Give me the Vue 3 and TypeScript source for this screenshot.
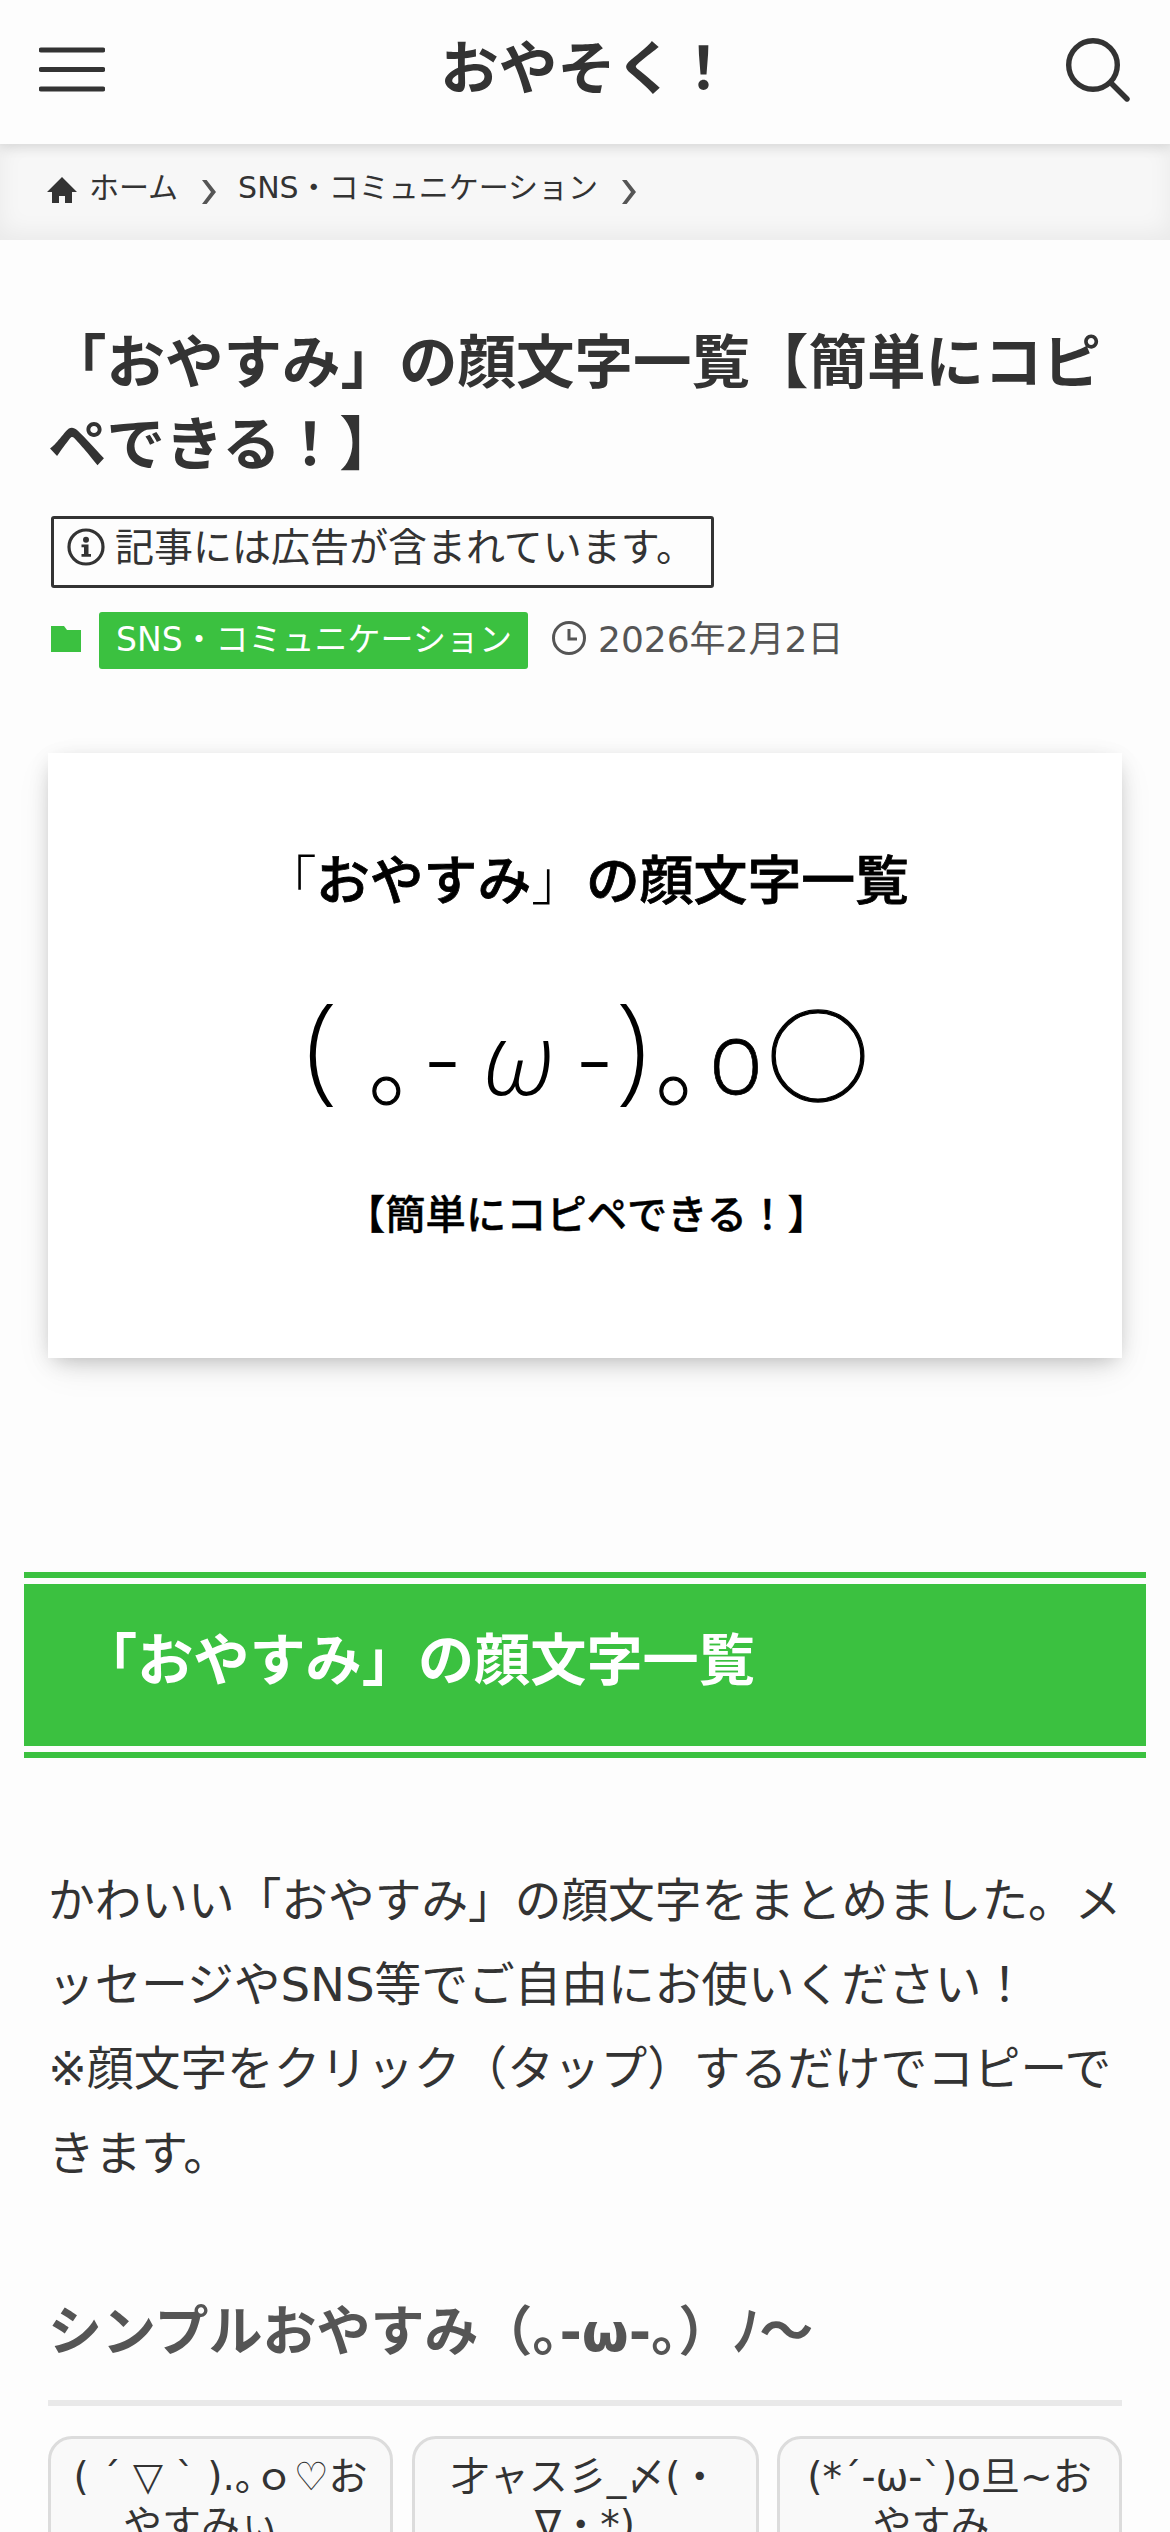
<script setup lang="ts">
interface Mark {
  text: string
  x: number
  y: number
  size: number
  kind: string
  length?: number
}

const crumbs: string[] = ['ホーム', 'SNS・コミュニケーション']

const kaomoji: Mark[] = [
  { text: '(', x: 257, y: 335, size: 118, kind: 'thin' },
  { text: '。', x: 320, y: 347, size: 94, kind: 'cjk' },
  { text: '-', x: 377, y: 341, size: 108, kind: 'thin' },
  { text: 'ω', x: 435, y: 342, size: 101, kind: 'omega' },
  { text: '-', x: 529, y: 341, size: 108, kind: 'thin' },
  { text: ')', x: 568, y: 335, size: 118, kind: 'thin' },
  { text: '。', x: 607, y: 347, size: 94, kind: 'cjk' },
  { text: 'o', x: 661, y: 341, size: 102, kind: 'round', length: 54 },
  { text: '○', x: 719, y: 342, size: 102, kind: 'cjk' },
]

const cards: { first: string; second: string; trail: number }[] = [
  { first: '( ´ ▽ ` ).｡ｏ♡お', second: 'やすみぃ', trail: 39 },
  { first: '才ャス彡_〆(・', second: '∇・*)', trail: 0 },
  { first: '(*´-ω-`)o旦~お', second: 'やすみ', trail: 37 },
]
</script>

<template>
  <div class="page">
    <header class="header">
      <svg class="menu" viewBox="0 0 66 46"><path d="M2 3H64M2 22.5H64M2 42H64" /></svg>
      <div class="logo">おやそく！</div>
      <svg class="search" viewBox="0 0 64 64"><circle cx="27" cy="27" r="24.3" /><path d="M45 45L61 61" /></svg>
    </header>

    <nav class="crumbs">
      <svg class="home" viewBox="0 0 30 26"><path d="M15 0L30 15H25V26H18V19H12V26H5V15H0Z" /></svg>
      <template v-for="c in crumbs" :key="c">
        <span>{{ c }}</span>
        <svg class="chev" viewBox="0 0 14 26"><path d="M0 1H4.6L14 13L4.6 25H0L9 13Z" /></svg>
      </template>
    </nav>

    <main>
      <h1>「おやすみ」の顔文字一覧【簡単にコピペできる！】</h1>
      <div class="notice">
        <svg viewBox="0 0 38 38">
          <circle cx="19" cy="19" r="17" fill="none" stroke="#333" stroke-width="3.2" />
          <circle cx="19" cy="11.8" r="3" />
          <path d="M14.5 16.5H21.5V26H24V28.8H14.5V26H17V19.3H14.5Z" />
        </svg>
        <span>記事には広告が含まれています。</span>
      </div>
      <div class="meta">
        <svg class="folder" viewBox="0 0 30 26"><path d="M0 0H13L16 4H30V26H0Z" /></svg>
        <span class="tag">SNS・コミュニケーション</span>
        <svg class="clock" viewBox="0 0 34 34"><circle cx="17" cy="17" r="15.5" /><path d="M17 8V18H25" /></svg>
        <time>2026年2月2日</time>
      </div>

      <figure class="hero">
        <svg viewBox="0 0 1074 605">
          <text class="hero-title" y="147"><tspan class="light" x="215">「</tspan><tspan x="268">おやすみ</tspan><tspan class="light" x="483">」</tspan><tspan x="538">の顔文字一覧</tspan></text>
          <text
            v-for="(m, i) in kaomoji"
            :key="i"
            :class="m.kind"
            :x="m.x"
            :y="m.y"
            :font-size="m.size"
            :textLength="m.length"
            lengthAdjust="spacingAndGlyphs"
          >{{ m.text }}</text>
          <text class="hero-sub" x="297" y="476">【簡単にコピペできる！】</text>
        </svg>
      </figure>

      <h2>「おやすみ」の顔文字一覧</h2>
      <p>かわいい「おやすみ」の顔文字をまとめました。メッセージやSNS等でご自由にお使いください！<br>※顔文字をクリック（タップ）するだけでコピーできます。</p>
      <h3>シンプルおやすみ（｡-ω-｡）ﾉ〜</h3>
      <div class="cards">
        <div v-for="c in cards" :key="c.first" class="card">
          <div>{{ c.first }}</div>
          <div :style="{ paddingRight: c.trail + 'px' }">{{ c.second }}</div>
        </div>
      </div>
    </main>
  </div>
</template>

<style>
body { margin: 0; background: #fdfdfd; }
</style>

<style scoped>
.page {
  width: 1170px;
  height: 2532px;
  overflow: hidden;
  background: #fdfdfd;
  color: #333;
  font-family: "DejaVu Sans", "Noto Sans CJK JP", sans-serif;
  font-size: 46.8px;
}
.header {
  position: relative;
  z-index: 1;
  box-sizing: border-box;
  height: 144px;
  padding: 0 40px 0 39px;
  display: flex;
  align-items: center;
  justify-content: space-between;
  background: #fdfdfd;
  box-shadow: 0 3px 12px rgba(0, 0, 0, 0.12);
}
.menu { width: 66px; height: 46px; margin-top: -5px; fill: none; stroke: #333; stroke-width: 4.8; stroke-linecap: round; }
.logo { font-size: 58.5px; font-weight: 700; line-height: 144px; margin: -6px 0 0 2px; }
.search { width: 64px; height: 64px; margin-top: -4px; fill: none; stroke: #333; stroke-width: 5.4; stroke-linecap: round; }
.crumbs {
  box-sizing: border-box;
  height: 96px;
  padding: 0 47px 10px;
  display: flex;
  align-items: center;
  background: #f7f7f7;
  box-shadow: inset 0 -6px 24px rgba(0, 0, 0, 0.06);
  font-size: 30px;
  line-height: 45px;
}
.home { width: 30px; height: 26px; margin: 6px 12px 0 0; fill: #333; }
.chev { width: 14px; height: 26px; margin: 9px 22px 0 24px; fill: #555; }
main { padding: 0 48px; }
h1 { margin: 83px 0 0; font-size: 58.5px; line-height: 81.9px; font-weight: 700; }
.notice {
  box-sizing: border-box;
  width: 663px;
  height: 72px;
  margin: 29px 0 0 3px;
  padding: 0 12px 10px 13px;
  display: flex;
  align-items: center;
  gap: 10px;
  border: 3px solid #333;
  border-radius: 3px;
  font-size: 39px;
  line-height: 56px;
  white-space: nowrap;
}
.notice svg { width: 38px; height: 38px; flex: none; fill: #333; }
.notice span { padding-top: 2px; }
.meta { height: 57px; margin-top: 24px; padding-left: 3px; display: flex; align-items: center; }
.folder { width: 30px; height: 26px; margin-top: -2px; fill: #3bc140; }
.tag {
  box-sizing: border-box;
  width: 429px;
  height: 57px;
  margin-left: 18px;
  padding: 0 17px;
  border-radius: 3px;
  background: #3bc140;
  color: #fff;
  font-size: 33px;
  line-height: 55px;
  white-space: nowrap;
}
.clock { width: 34px; height: 34px; margin: -5px 12px 0 24px; fill: none; stroke: #555; stroke-width: 3; }
time { color: #555; font-size: 36px; line-height: 54px; margin-top: -1px; }
.hero { width: 1074px; height: 605px; margin: 84px 0 0; background: #fff; box-shadow: 0 6px 21px -6px rgba(0, 0, 0, 0.25), 0 12px 36px -6px rgba(0, 0, 0, 0.1); }
.hero svg { display: block; width: 1074px; height: 605px; fill: #000; font-family: "Noto Sans CJK JP", sans-serif; }
.hero-title { font-size: 53.8px; font-weight: 500; stroke: #000; stroke-width: 0.8; }
.hero-sub { font-size: 40.3px; font-weight: 500; stroke: #000; stroke-width: 0.4; }
.light { font-weight: 300; stroke: none; }
.thin, .omega, .round { font-family: "Open Sans", "Noto Sans", sans-serif; font-weight: 300; }
.omega { font-style: italic; }
.round { stroke: #000; stroke-width: 0.8; }
.cjk { font-weight: 100; stroke: #000; stroke-width: 1.2; }
h2 {
  position: relative;
  box-sizing: border-box;
  height: 162px;
  margin: 226px -24px 0;
  padding: 38px 57px 0;
  background: #3bc140;
  color: #fff;
  font-size: 56.16px;
  line-height: 78.6px;
  font-weight: 700;
}
h2::before, h2::after { content: ""; position: absolute; left: 0; width: 100%; height: 6px; background: #3bc140; }
h2::before { top: -12px; }
h2::after { bottom: -12px; }
p { margin: 113px 0 0; font-size: 46.68px; line-height: 84.24px; line-break: loose; }
h3 {
  box-sizing: border-box;
  height: 124px;
  margin: 86px 0 0;
  padding-top: 13px;
  border-bottom: 6px solid #e9e9e9;
  color: #555;
  font-size: 54px;
  line-height: 75px;
  font-weight: 700;
  white-space: nowrap;
}
.cards { display: grid; grid-template-columns: 345px 347px 345px; justify-content: space-between; margin-top: 30px; }
.card {
  box-sizing: border-box;
  height: 160px;
  padding: 14px 0;
  border: 3px solid #dcdcdc;
  border-radius: 24px;
  background: #f9f9f9;
  font-size: 39px;
  line-height: 48px;
  text-align: center;
  white-space: nowrap;
}
</style>
